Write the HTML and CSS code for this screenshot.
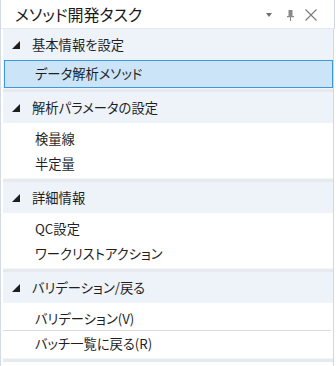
FILE: index.html
```html
<!DOCTYPE html>
<html lang="ja">
<head>
<meta charset="utf-8">
<title>メソッド開発タスク</title>
<link rel="stylesheet" href="styles.css">
</head>
<body>
<div class="panel">
  <div class="titlebar">
    <span class="title">メソッド開発タスク</span>
    <div class="tools">
      <svg class="tool drop" width="6" height="4" viewBox="0 0 6 4"><path d="M0 0H6L3 4Z" fill="#6f6f6f"/></svg>
      <svg class="tool pin" width="7" height="11" viewBox="0 0 7 11"><path d="M1.5 0H5.5V6H1.5Z M0 6H7V7.2H0Z M3 7H4V11H3Z" fill="#8a8a8a"/></svg>
      <svg class="tool close" width="12" height="12" viewBox="0 0 12 12"><path d="M0.5 0.5L11.5 11.5M11.5 0.5L0.5 11.5" stroke="#7a7a7a" stroke-width="1.1" fill="none"/></svg>
    </div>
  </div>
  <div class="body">
    <section class="group group-first">
      <div class="header"><span class="tri"></span><span>基本情報を設定</span></div>
      <div class="items items-first">
        <div class="item selected">データ解析メソッド</div>
      </div>
    </section>
    <div class="sep"></div>
    <section class="group">
      <div class="header"><span class="tri"></span><span>解析パラメータの設定</span></div>
      <div class="items">
        <div class="item">検量線</div>
        <div class="item">半定量</div>
      </div>
    </section>
    <div class="sep"></div>
    <section class="group">
      <div class="header"><span class="tri"></span><span>詳細情報</span></div>
      <div class="items">
        <div class="item">QC設定</div>
        <div class="item">ワークリストアクション</div>
      </div>
    </section>
    <div class="sep"></div>
    <section class="group">
      <div class="header"><span class="tri"></span><span>バリデーション/戻る</span></div>
      <div class="items">
        <div class="item divided">バリデーション(V)</div>
        <div class="item">バッチ一覧に戻る(R)</div>
      </div>
    </section>
    <div class="sep"></div>
  </div>
</div>
</body>
</html>
```
FILE: styles.css
```css
html, body {
  margin: 0;
  padding: 0;
  background: #ffffff;
}
body {
  font-family: "Noto Sans CJK JP", "Noto Sans", sans-serif;
  font-feature-settings: "palt";
  color: #1f1f1f;
}
.panel {
  width: 336px;
  height: 366px;
  box-sizing: border-box;
  border-left: 1px solid #d3dae3;
  display: flex;
  flex-direction: column;
  overflow: hidden;
}
.titlebar {
  height: 28px;
  border-bottom: 1px solid #e6ebf1;
  border-right: 1px solid #cfd8e2;
  width: 333px;
  box-sizing: content-box;
  display: flex;
  align-items: center;
  justify-content: space-between;
  background: #ffffff;
}
.title {
  font-size: 16px;
  line-height: 28px;
  padding-left: 14px;
  color: #1a1a1a;
}
.tools {
  display: flex;
  align-items: center;
  padding-right: 17px;
  padding-top: 2px;
}
.tool {
  display: block;
}
.drop {
  margin-right: 15px;
}
.pin {
  margin-right: 11px;
}
.body {
  width: 330px;
  margin-left: 2px;
  border-right: 1px solid #cfd8e2;
  flex: 1;
}
.group {
  background: #ffffff;
}
.header {
  height: 31px;
  background: #eef3f9;
  display: flex;
  align-items: center;
  font-size: 13.3px;
  color: #1f1f1f;
}
.tri {
  width: 0;
  height: 0;
  border-left: 8px solid transparent;
  border-bottom: 8px solid #1e1e1e;
  margin-left: 9px;
  margin-right: 12px;
  margin-top: 1px;
}
.items {
  padding: 3px 0 2px;
}
.items-first {
  padding: 0 0 0 1px;
  background: #eef3f9;
}
.item {
  height: 25px;
  line-height: 25px;
  padding-left: 32px;
  font-size: 13.3px;
  color: #1f1f1f;
}
.item.selected {
  height: 26px;
  line-height: 26px;
  padding-left: 30px;
  background: #cce4f7;
  border: 1px solid #3c97de;
}
.item.divided {
  border-bottom: 1px solid #dcdcdc;
  height: 24px;
  margin-right: 2px;
}
.sep {
  height: 4px;
  box-sizing: border-box;
  border-top: 1px solid #f3f6f9;
  background: #e6eaee;
}
```
